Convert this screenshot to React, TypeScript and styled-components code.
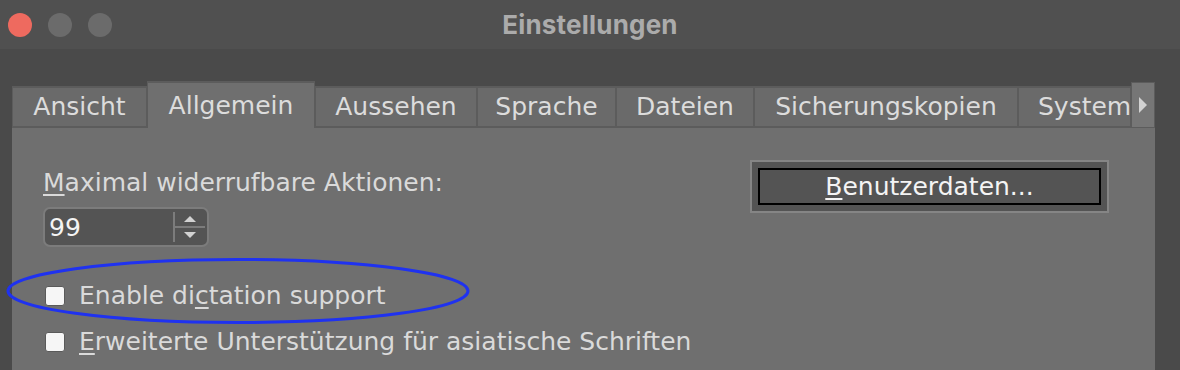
import React from 'react';
import styled, { createGlobalStyle } from 'styled-components';

const Global = createGlobalStyle`
  html, body { margin: 0; padding: 0; background: #4a4a4a; }
  body {
    width: 1180px; height: 370px; overflow: hidden;
    font-family: "DejaVu Sans", "Liberation Sans", sans-serif;
  }
`;

const Window = styled.div`
  position: relative;
  display: flex;
  flex-direction: column;
  width: 1180px;
  height: 370px;
  background: #4a4a4a;
  overflow: hidden;
`;

const TitleBar = styled.div`
  height: 49px;
  flex: none;
  background: #505050;
  display: grid;
  grid-template-columns: 1fr auto 1fr;
  align-items: center;
  padding: 0 8px;
`;

const Lights = styled.div`
  display: flex;
  gap: 16px;
`;

const Light = styled.span<{ $c: string }>`
  width: 24px;
  height: 24px;
  border-radius: 50%;
  background: ${p => p.$c};
`;

const Title = styled.div`
  font-family: Inter, "DejaVu Sans", sans-serif;
  font-weight: 700;
  font-size: 26px;
  color: #ababab;
  letter-spacing: 0.2px;
`;

const Content = styled.div`
  flex: 1;
  display: flex;
  flex-direction: column;
  padding: 32px 25px 0 12px;
`;

const TabRow = styled.div`
  display: flex;
  align-items: flex-end;
  height: 47px;
  flex: none;
`;

const Tab = styled.div<{ $active?: boolean; $w: number; $clip?: boolean }>`
  box-sizing: border-box;
  width: ${p => p.$w}px;
  height: ${p => (p.$active ? 47 : 42)}px;
  display: flex;
  align-items: center;
  justify-content: ${p => (p.$clip ? 'flex-start' : 'center')};
  padding-left: ${p => (p.$clip ? 19 : 0)}px;
  overflow: hidden;
  white-space: nowrap;
  background: ${p => (p.$active ? '#6f6f6f' : '#6a6a6a')};
  border: 1px solid #5c5c5c;
  border-top-width: 2px;
  border-bottom: ${p => (p.$active ? '0' : '2px solid #5c5c5c')};
  font-size: 25px;
  line-height: 30px;
  color: #dcdcdc;
`;

const ArrowButton = styled.div`
  box-sizing: border-box;
  width: 24px;
  height: 46px;
  background: #767676;
  border: 1px solid #5c5c5c;
  display: flex;
  align-items: center;
  justify-content: center;
  &::after {
    content: '';
    border-left: 8px solid #d2d2d2;
    border-top: 8px solid transparent;
    border-bottom: 8px solid transparent;
  }
`;

const Panel = styled.div`
  flex: 1;
  background: #6f6f6f;
  display: flex;
  flex-direction: column;
`;

const TopRow = styled.div`
  display: flex;
  justify-content: space-between;
  align-items: flex-start;
  padding: 32px 46px 0 31px;
`;

const Field = styled.div`
  display: flex;
  flex-direction: column;
  gap: 9px;
  margin-top: 8px;
`;

const Label = styled.div`
  font-size: 25px;
  line-height: 30px;
  color: #dadada;
  white-space: nowrap;
`;

const Mnemonic = styled.span`
  text-decoration: underline;
  text-decoration-thickness: 2px;
  text-underline-offset: 3px;
`;

const Spinner = styled.div`
  box-sizing: border-box;
  width: 166px;
  height: 40px;
  border: 2px solid #7c7c7c;
  border-radius: 7px;
  background: #545454;
  display: flex;
  align-items: stretch;
`;

const SpinValue = styled.div`
  flex: 1;
  display: flex;
  align-items: center;
  padding-left: 4px;
  font-size: 25px;
  color: #f4f4f4;
`;

const Steppers = styled.div`
  width: 30px;
  margin: 3px 2px 3px 0;
  border-left: 2px solid #7c7c7c;
  display: flex;
  flex-direction: column;
`;

const Step = styled.div<{ $down?: boolean }>`
  flex: 1;
  display: flex;
  align-items: center;
  justify-content: center;
  border-bottom: ${p => (p.$down ? '0' : '2px solid #7c7c7c')};
  &::after {
    content: '';
    border-left: 6px solid transparent;
    border-right: 6px solid transparent;
    ${p =>
      p.$down
        ? 'border-top: 6px solid #d2d2d2;'
        : 'border-bottom: 6px solid #d2d2d2;'}
  }
`;

const Button = styled.div`
  box-sizing: border-box;
  width: 359px;
  height: 53px;
  border: 2px solid #858585;
  background: #545454;
  padding: 6px;
  display: flex;
`;

const ButtonFace = styled.div`
  flex: 1;
  border: 2px solid #000;
  display: flex;
  align-items: center;
  justify-content: center;
  font-size: 25px;
  color: #f4f4f4;
`;

const Checks = styled.div`
  display: flex;
  flex-direction: column;
  gap: 16px;
  margin-top: 34px;
  padding-left: 33px;
`;

const CheckRow = styled.div`
  display: flex;
  align-items: center;
  gap: 14px;
  height: 30px;
`;

const Box = styled.span`
  box-sizing: border-box;
  width: 20px;
  height: 20px;
  border-radius: 3px;
  background: #f6f6f6;
  border: 1px solid #5a5a5a;
  flex: none;
`;

const Highlight = styled.svg`
  position: absolute;
  left: 5px;
  top: 257px;
  width: 466px;
  height: 68px;
  pointer-events: none;
`;

const tabs: { label: string; w: number; active?: boolean; clip?: boolean }[] = [
  { label: 'Ansicht', w: 135 },
  { label: 'Allgemein', w: 168, active: true },
  { label: 'Aussehen', w: 162 },
  { label: 'Sprache', w: 139 },
  { label: 'Dateien', w: 138 },
  { label: 'Sicherungskopien', w: 264 },
  { label: 'System', w: 113, clip: true },
];

export default function App() {
  return (
    <Window>
      <Global />
      <TitleBar>
        <Lights>
          <Light $c="#ee6a5f" />
          <Light $c="#6b6b6b" />
          <Light $c="#6b6b6b" />
        </Lights>
        <Title>Einstellungen</Title>
        <div />
      </TitleBar>
      <Content>
        <TabRow>
          {tabs.map(t => (
            <Tab key={t.label} $w={t.w} $active={t.active} $clip={t.clip}>
              {t.label}
            </Tab>
          ))}
          <ArrowButton />
        </TabRow>
        <Panel>
          <TopRow>
            <Field>
              <Label>
                <Mnemonic>M</Mnemonic>aximal widerrufbare Aktionen:
              </Label>
              <Spinner>
                <SpinValue>99</SpinValue>
                <Steppers>
                  <Step />
                  <Step $down />
                </Steppers>
              </Spinner>
            </Field>
            <Button>
              <ButtonFace>
                <span>
                  <Mnemonic>B</Mnemonic>enutzerdaten...
                </span>
              </ButtonFace>
            </Button>
          </TopRow>
          <Checks>
            <CheckRow>
              <Box />
              <Label>
                Enable di<Mnemonic>c</Mnemonic>tation support
              </Label>
            </CheckRow>
            <CheckRow>
              <Box />
              <Label>
                <Mnemonic>E</Mnemonic>rweiterte Unterstützung für asiatische Schriften
              </Label>
            </CheckRow>
          </Checks>
        </Panel>
      </Content>
      <Highlight viewBox="0 0 466 68">
        <ellipse cx="233" cy="34" rx="230" ry="31.5" fill="none" stroke="#1f32f0" strokeWidth="3" />
      </Highlight>
    </Window>
  );
}
